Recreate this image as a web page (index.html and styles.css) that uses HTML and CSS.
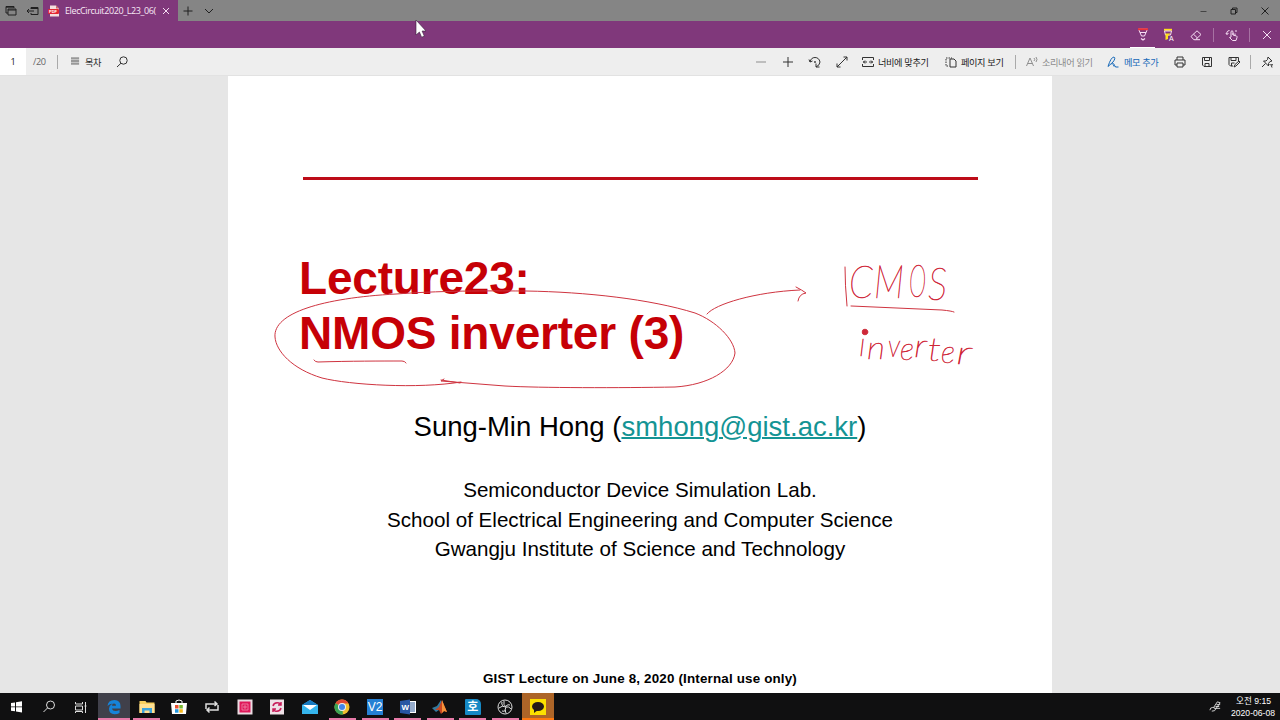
FILE: index.html
```html
<!DOCTYPE html>
<html lang="ko">
<head>
    <meta charset="UTF-8">
    <meta name="viewport" content="width=device-width, initial-scale=1.0">
    <title>ElecCircuit2020_L23</title>
    <link rel="stylesheet" href="styles.css">
</head>
<body>
<!-- Tabs -->
<header class="titlebar">
    <div class="tab-tools">
        <svg class="icon dark" viewBox="0 0 14 14"><path d="M4 9H2V2.5h8V4M2 3.2h8M4 5h8v6H4zM4 6h8"/></svg>
        <svg class="icon dark" viewBox="0 0 14 14"><path d="M6 5V3.5h7v7H6V9M6 4.5h7M2 7h7M4 5L2 7l2 2"/></svg>
    </div>
    <div class="tab">
        <svg class="pdf-icon" viewBox="0 0 12 12"><path d="M2 0.5h6l3 3v8H2z" fill="#f4dede"/><path d="M8 .5v3h3" fill="#c66"/><rect y="4" width="11" height="5" rx="1" fill="#e32632"/><text x="1" y="8.2">PDF</text></svg>
        <span class="tab-title">ElecCircuit2020_L23_06(</span>
        <svg class="icon light" viewBox="0 0 14 14"><path d="M4 4l6 6M10 4l-6 6"/></svg>
    </div>
    <svg class="icon dark new-tab" viewBox="0 0 14 14"><path d="M7 2.5v9M2.500 7h9"/></svg>
    <svg class="icon dark tab-menu" viewBox="0 0 14 14"><path d="M3 5l4 4 4-4"/></svg>
    <div class="window-buttons">
        <svg class="icon dark" viewBox="0 0 14 14"><path d="M4.500 7.500h6" stroke="#444"/></svg>
        <svg class="icon dark" viewBox="0 0 14 14"><path d="M4 5.500h4.500V10H4zM5.500 5.500V4H10v4.500H8.500"/></svg>
        <svg class="icon dark" viewBox="0 0 14 14"><path d="M3.500 3.500l7 7M10.500 3.500l-7 7"/></svg>
    </div>
</header>

<!-- Ink tools -->
<div class="inkbar">
    <div class="ink-tool active">
        <svg class="icon light" viewBox="0 0 14 14"><path d="M2.500 2h9L8.500 9h-3zM4 5.500h6"/><path d="M2 2.200h10" stroke="#e8303a" stroke-width="2"/><path d="M5 11.500l2 1.500L9 11.500" stroke-width="1.300"/></svg>
    </div>
    <div class="ink-tool">
        <svg class="icon light" viewBox="0 0 14 14"><path d="M2 1.800h8" stroke="#ffe11c" stroke-width="2"/><path d="M2.500 3h7L8.500 7h-5z"/><path d="M3.500 5.500h5L6 8v3l-2.500 1z" fill="#ffe11c" stroke="none"/><text x="7" y="12.500">A</text></svg>
    </div>
    <div class="ink-tool">
        <svg class="icon light" viewBox="0 0 14 14"><path d="M2 8.500L8 2.800l4 3.700-5.500 5.200H4.800zM4.500 6.200l4 3.800M6.500 11.700H11"/></svg>
    </div>
    <span class="sep"></span>
    <div class="ink-tool touch">
        <svg class="icon light" viewBox="0 0 14 14"><path d="M6 9V3.500q1-1.500 2 0V7l3.500 1q.8.300.5 1.500L11 12.500H7.500L4.500 9.500 6 9.200M8 7V5M10 7.500V5.500M4.500 2.500Q1 3 2 6.500M2 6.500L.8 5M2 6.500L3.500 5M11 2v2"/></svg>
    </div>
    <span class="sep"></span>
    <div class="ink-tool exit">
        <svg class="icon light" viewBox="0 0 14 14"><path d="M3 3l8 8M11 3l-8 8"/></svg>
    </div>
</div>

<!-- Document toolbar -->
<nav class="toolbar">
    <span class="page-number">1</span>
    <span class="page-total">/20</span>
    <span class="sep"></span>
    <div class="contents">
        <svg class="icon list" viewBox="0 0 10 10"><path d="M0 1.500h9M0 4.500h9M0 7.500h9" stroke="#999" stroke-width="2.400"/></svg>
        <span>목차</span>
    </div>
    <svg class="icon search" viewBox="0 0 14 14"><circle cx="8.500" cy="5.500" r="3.700"/><path d="M6 8.200L2 12"/></svg>
    <div class="zoom">
        <svg class="icon off" viewBox="0 0 14 14"><path d="M2 7h10"/></svg>
        <svg class="icon" viewBox="0 0 14 14"><path d="M7 2v10M2 7h10"/></svg>
        <svg class="icon" viewBox="0 0 14 14"><path d="M2 7Q3 2.500 7 2.500t5 4.500q0 3-4 5M1 4.500L2 7l2.500-1M8 8.500V12h3.500"/><circle cx="7" cy="7" r=".6"/></svg>
        <svg class="icon" viewBox="0 0 14 14"><path d="M2 12L12 2M8.500 2H12v3.500M2 8.500V12h3.500"/></svg>
    </div>
    <div class="tool fit">
        <svg class="icon" viewBox="0 0 14 14"><path d="M1.500 5V2.500h11V5M1.500 9v2.500h11V9M2 7h4M8 7h4M4 5.500L2.500 7 4 8.500M10 5.500L11.500 7 10 8.500"/></svg>
        <span>너비에 맞추기</span>
    </div>
    <div class="tool view">
        <svg class="icon" viewBox="0 0 14 14"><path d="M6 4h4l2 2v6H6z"/><path d="M4 11H2V3h6" stroke-dasharray="1.500 1"/></svg>
        <span>페이지 보기</span>
    </div>
    <span class="sep"></span>
    <div class="tool read off">
        <svg class="icon" viewBox="0 0 14 14"><path d="M1.500 11L5 3l3.500 8M2.800 8.500h4.500M9 3q1.500 1.500 0 3M11 2q2 2.500 0 5"/></svg>
        <span>소리내어 읽기</span>
    </div>
    <div class="tool note">
        <svg class="icon" viewBox="0 0 14 14"><path d="M2 11.500Q5 2 8 2q2 1-1 5L2 11.500M5.500 9q4-1 2 2 2-1 2 1h3" /></svg>
        <span>메모 추가</span>
    </div>
    <div class="file-tools">
        <svg class="icon" viewBox="0 0 14 14"><path d="M4 5V2h6v3M4 10H2V5h10v5h-2M4 8h6v4H4z"/></svg>
        <svg class="icon" viewBox="0 0 14 14"><path d="M2.500 2.500h9v9H4l-1.500-1.500zM4.500 2.500v3h5v-3M5 11.500V8.500h4v3"/></svg>
        <svg class="icon" viewBox="0 0 14 14"><path d="M6 11H3.500L2 9.500v-7h9.500V6M4 2.500v3h5v-3M4.500 11V8h3M7 12l1-2.500 4-3.500 1 1-4 4z"/></svg>
    </div>
    <span class="sep"></span>
    <svg class="icon pin" viewBox="0 0 14 14"><path d="M8 2l4 4-2 .5-1.500 2v2.500L3.500 6H6l1.500-1.500zM5.500 8.500L2 12M9.500 9l1 1 2-.5-1 1.500.5 1.500"/></svg>
</nav>

<!-- Slide -->
<main class="viewer">
    <article class="slide">
        <hr class="rule">
        <h1>Lecture23:<br>NMOS inverter (3)</h1>
        <p class="author">Sung-Min Hong (<a href="mailto:smhong@gist.ac.kr">smhong@gist.ac.kr</a>)</p>
        <p class="lab">Semiconductor Device Simulation Lab.<br>School of Electrical Engineering and Computer Science<br>Gwangju Institute of Science and Technology</p>
        <footer>GIST Lecture on June 8, 2020 (Internal use only)</footer>

        <!-- Pen annotations -->
        <svg class="ink" viewBox="228 76 824 617">
            <path d="M461 382C418 389 350 385 322 378C292 369 276 351 275 337C273 313 322 298 396 294C450 290 500 291 526 291C586 292 650 299 695 313C716 321 734 339 735 353C733 370 708 385 675 387C620 388 540 388 505 386L441 381l3-2M441 380l19 3"/>
            <path d="M314 360q1 2 4 2C350 361 382 361 402 361q3 0 4 2"/>
            <path d="M707 314C715 304 755 292 800 290M796 287q6 3 10 6q-7 1-8 8"/>
            <path d="M845 267q0 18 2 39M851 306L942 310q10 1 12 2"/>
            <g class="hand big">
                <text x="849" y="298" textLength="24" lengthAdjust="spacingAndGlyphs">C</text>
                <text x="874" y="298" textLength="30" lengthAdjust="spacingAndGlyphs">M</text>
                <text x="909" y="297" textLength="17" lengthAdjust="spacingAndGlyphs">O</text>
                <text x="928" y="300" textLength="19" lengthAdjust="spacingAndGlyphs">S</text>
            </g>
            <g class="hand">
                <text class="tall" x="859" y="356">i</text>
                <text x="867" y="359" textLength="18" lengthAdjust="spacingAndGlyphs">n</text>
                <text x="888" y="357" textLength="12" lengthAdjust="spacingAndGlyphs">v</text>
                <text x="900" y="360" textLength="14" lengthAdjust="spacingAndGlyphs">e</text>
                <text x="914" y="357" textLength="13" lengthAdjust="spacingAndGlyphs">r</text>
                <text x="928" y="361" textLength="13" lengthAdjust="spacingAndGlyphs">t</text>
                <text x="941" y="363" textLength="14" lengthAdjust="spacingAndGlyphs">e</text>
                <text x="956" y="364" textLength="16" lengthAdjust="spacingAndGlyphs">r</text>
            </g>
            <circle class="dot" cx="865" cy="332" r="2.800"/>
        </svg>
    </article>
</main>

<!-- Taskbar -->
<div class="taskbar">
    <div class="task"><svg viewBox="0 0 16 16"><path d="M3 4l4-.6v4H3zM8 3.200l6-.9v5.100H8zM3 8.300h4v4l-4-.6zM8 8.300h6v5.100l-6-.9z" fill="#fff"/></svg></div>
    <div class="task"><svg class="line" viewBox="0 0 16 16"><circle cx="9.500" cy="6" r="4"/><path d="M6.700 8.800L2.500 13"/></svg></div>
    <div class="task"><svg class="line" viewBox="0 0 16 16"><path d="M1.500 3v2h7V3M1.500 7h7v4h-7zM1.500 14v-1.500h7V14M11.500 3v11M10.500 7h2"/></svg></div>
    <div class="task open current"><svg viewBox="0 0 16 16"><path d="M1.500 7Q2 1 8.500 1q6 .5 6 6v2.500H6q.5 2.500 3.500 2.500 2 0 4-1v3q-2 1.200-5 1.200-5.500-.5-5.500-5.500Q3.200 6.500 6.500 4.500 3 5 1.500 7zM6 6.800h4Q10 4.600 8 4.600T6 6.800z" fill="#1683d9" fill-rule="evenodd"/></svg></div>
    <div class="task open"><svg viewBox="0 0 16 16"><path d="M0.500 2h6l1 1.500h8V14h-15z" fill="#f7cf5f"/><path d="M.5 5h15v9H.5z" fill="#ffe093"/><path d="M3 9h10v5h-2.500v-2.500h-5V14H3z" fill="#3da4dd"/></svg></div>
    <div class="task"><svg viewBox="0 0 16 16"><path d="M5 4V2q3-2 6 0v2" fill="none" stroke="#fff"/><path d="M0 4h16l-1 11H1z" fill="#fff"/><path d="M4 6h3.500v3.500H4z" fill="#e95030"/><path d="M8.300 6h3.500v3.500H8.300z" fill="#78b830"/><path d="M4 10.200h3.500v3.500H4z" fill="#2498e0"/><path d="M8.300 10.200h3.500v3.500H8.300z" fill="#f7b81d"/></svg></div>
    <div class="task"><svg class="line bold" viewBox="0 0 16 16"><path d="M2 10V5h11M10.500 2.500L13 5l-2.500 2M14 6v5H3M5.500 8.500L3 11l2.500 2.500"/></svg></div>
    <div class="task"><svg viewBox="0 0 16 16"><path d="M.5.500h15v15H.5z" fill="#eadbe1"/><path d="M2.500 2.500h11v11h-11z" fill="#df1859"/><path d="M5 5h6v6H5zM7 7h2v2H7z" fill="none" stroke="#f08aac" stroke-width=".8"/></svg></div>
    <div class="task"><svg viewBox="0 0 16 16"><path d="M1 .5h14v15H1z" fill="#eee1e6"/><path d="M4 7q1-4 6-3l2 2M12 3v3H9M12 9q-1 4-6 3l-2-2M4 13v-3h3" fill="none" stroke="#c81d5a" stroke-width="1.500"/></svg></div>
    <div class="task"><svg viewBox="0 0 16 16"><path d="M0 6l8-5 8 5v9H0z" fill="#35b5ed"/><path d="M0 6l8-5 8 5z" fill="#1779bf"/><path d="M1 6h14l-7 5z" fill="#fff"/></svg></div>
    <div class="task open"><svg viewBox="0 0 16 16"><circle cx="8" cy="8" r="7.500" fill="#efbf2f"/><path d="M8 8L1.500 4.200A7.500 7.500 0 0 1 14.500 4.500H8z" fill="#df4735"/><path d="M8 8l1 7.400A7.500 7.500 0 0 1 1.500 4.200z" fill="#3aa354"/><circle cx="8" cy="8" r="4" fill="#eee"/><circle cx="8" cy="8" r="3" fill="#4285e8"/></svg></div>
    <div class="task open"><span class="app v2">V2</span></div>
    <div class="task open"><svg viewBox="0 0 16 16"><path d="M7 2h9v12H7z" fill="#fff"/><path d="M9 4h6M9 6h6M9 8h6M9 10h6M9 12h6" stroke="#2c5898"/><path d="M0 2l10-1.500v15L0 14z" fill="#2856a3"/><text class="word" x="1.500" y="11">W</text></svg></div>
    <div class="task open"><svg viewBox="0 0 16 16"><path d="M0 9l5-2 4-6 2 8-4 2-3 2z" fill="#347b9f"/><path d="M3 11l4-3 3-7 2 5 3 7-3-1-3 3-2-4z" fill="#c84822"/><path d="M10 1l2 5 3 7-3-1-2 2z" fill="#f5933a"/></svg></div>
    <div class="task open"><span class="app han">호</span></div>
    <div class="task open"><svg class="line" viewBox="0 0 16 16"><circle cx="8" cy="8" r="7"/><path d="M7 2q-1 4 2 6 3-1 5 2M9 8q-2 3 0 6M9 8Q5 6 2 9M5 3q-1 2 1 4M13 6q-2-1-4 1M5 12q2 1 4-1"/></svg></div>
    <div class="task open talk"><svg viewBox="0 0 16 16"><path d="M0 0h16v16H0z" fill="#fce000"/><ellipse cx="8" cy="7.500" rx="6" ry="4.500" fill="#251a17"/><path d="M4 10v4l4-3z" fill="#251a17"/></svg></div>
    <svg class="tray line" viewBox="0 0 14 14"><path d="M1 11q0-3 3-3t3 2-4 2M5 8l4-6 3 1-5 7M8 5h4M7 7h4M6 9h6"/></svg>
    <div class="clock"><span>오전 9:15</span><span>2020-06-08</span></div>
</div>

<svg class="cursor" viewBox="0 0 12 20"><path d="M1 1v15l3.400-3 2.200 5.200 2.700-1.100L7.100 12H11z"/></svg>
</body>
</html>
```

FILE: styles.css
```css
* {
    box-sizing: border-box;
}
body {
    margin: 0;
    width: 1280px;
    height: 720px;
    overflow: hidden;
    background-color: #e6e6e6;
    font-family: "Liberation Sans", "Noto Sans CJK KR", sans-serif;
    display: flex;
    flex-direction: column;
}
svg {
    display: block;
    flex: none;
}
.icon {
    width: 14px;
    height: 14px;
    fill: none;
    stroke: #333;
    stroke-width: 1;
}
.icon.dark {
    stroke: #202020;
}
.icon.light {
    stroke: #f6def4;
}
.icon text {
    font-size: 7px;
    fill: #fff;
    stroke: none;
}
.sep {
    width: 1px;
    height: 14px;
    flex: none;
    background-color: #aaa;
}

/* tabs */
.titlebar {
    height: 21px;
    flex: none;
    display: flex;
    align-items: center;
    background-color: #858585;
}
.tab-tools {
    width: 43px;
    padding-left: 4px;
    display: flex;
    gap: 7px;
}
.tab {
    width: 135px;
    height: 21px;
    padding-left: 5px;
    display: flex;
    align-items: center;
    background-color: #80387b;
    color: #f7e8f5;
}
.pdf-icon {
    width: 12px;
    height: 12px;
}
.pdf-icon text {
    font-size: 4px;
    font-weight: bold;
    fill: #fff;
}
.tab-title {
    width: 92px;
    margin-left: 5px;
    margin-right: 2px;
    white-space: nowrap;
    font: 9px "Open Sans", sans-serif;
    letter-spacing: -0.4px;
}
.new-tab {
    margin-left: 3px;
}
.tab-menu {
    margin-left: 7px;
}
.window-buttons {
    margin-left: auto;
    padding-right: 8px;
    display: flex;
    gap: 17px;
}

/* ink tools */
.inkbar {
    height: 27px;
    flex: none;
    display: flex;
    align-items: center;
    justify-content: flex-end;
    background-color: #80387b;
}
.ink-tool {
    width: 27px;
    height: 27px;
    display: flex;
    align-items: center;
    justify-content: center;
}
.ink-tool.active {
    width: 25px;
    border-bottom: 1px solid #fff;
}
.inkbar .sep {
    background-color: #a772a3;
    margin-left: 4px;
}
.ink-tool.touch {
    width: 35px;
}
.inkbar .touch + .sep {
    margin-left: 0;
}
.ink-tool.exit {
    width: 27px;
    margin-left: 3px;
}

/* document toolbar */
.toolbar {
    height: 28px;
    flex: none;
    display: flex;
    align-items: center;
    background-color: #eee;
    border-bottom: 1px solid #e2e2e2;
    font: 9.200px "Noto Sans CJK KR", sans-serif;
    letter-spacing: -0.4px;
    color: #222;
}
.page-number {
    width: 26px;
    height: 27px;
    line-height: 27px;
    text-align: center;
    font-family: "Open Sans", sans-serif;
    background-color: #fff;
}
.page-total {
    width: 31px;
    padding-left: 7px;
    color: #666;
    font-family: "Open Sans", sans-serif;
}
.contents {
    display: flex;
    align-items: center;
    gap: 5px;
    margin-left: 13px;
    width: 45px;
}
.icon.list {
    width: 9px;
    height: 9px;
}
.search {
    margin-left: -1px;
}
.zoom {
    margin-left: 625px;
    display: flex;
    gap: 13px;
}
.off {
    opacity: 0.5;
}
.tool {
    display: flex;
    align-items: center;
    gap: 3px;
    flex: none;
    white-space: nowrap;
}
.tool.fit {
    width: 83px;
    margin-left: 12px;
}
.tool.view {
    width: 71px;
}
.tool.read {
    width: 81px;
    margin-left: 9px;
}
.tool.note {
    width: 66px;
    gap: 4px;
    color: #1467b8;
}
.tool.note .icon {
    stroke: #1467b8;
}
.file-tools {
    display: flex;
    gap: 13px;
    margin-left: 1px;
    margin-right: 9px;
}
.pin {
    margin-left: 9px;
}

/* slide */
.viewer {
    height: 617px;
    flex: none;
    display: flex;
    justify-content: center;
}
.slide {
    position: relative;
    width: 824px;
    height: 617px;
    background-color: #fff;
    color: #000;
    text-align: center;
    display: flex;
    flex-direction: column;
}
.rule {
    width: 675px;
    height: 3px;
    margin: 101px auto 0 75px;
    border: none;
    background-color: #bd0c18;
}
h1 {
    margin: 71px 0 0 71px;
    text-align: left;
    font-size: 46px;
    line-height: 55px;
    letter-spacing: -0.2px;
    color: #c60006;
}
.author {
    margin: 50px 0 0;
    font-size: 27.500px;
    line-height: 32px;
}
.author a {
    color: #149494;
    text-decoration-thickness: 2px;
}
.lab {
    margin: 32px 0 0;
    font-size: 20.600px;
    line-height: 29.600px;
}
footer {
    margin-top: auto;
    padding-bottom: 6px;
    font-size: 13.400px;
    letter-spacing: 0.17px;
    line-height: 16px;
    font-weight: bold;
}
.ink {
    position: absolute;
    left: 0;
    top: 0;
    width: 824px;
    height: 617px;
    fill: none;
    stroke: #cf3440;
    stroke-width: 1;
    stroke-linecap: round;
}
.hand {
    font-family: Lato, sans-serif;
    font-weight: 100;
    font-style: italic;
    font-size: 31px;
    fill: #cf2638;
    stroke: #cf2638;
    stroke-width: 0.6;
}
.hand .tall {
    font-size: 34px;
}
.hand.big {
    font-size: 46px;
}
.dot {
    fill: #cf2638;
}

/* taskbar */
.taskbar {
    height: 27px;
    flex: none;
    display: flex;
    align-items: center;
    background-color: #101011;
}
.task {
    width: 32.620px;
    height: 27px;
    display: flex;
    flex: none;
    align-items: center;
    justify-content: center;
}
.task svg {
    width: 16px;
    height: 16px;
}
.task.open {
    background: linear-gradient(#e77aa8, #e77aa8) center bottom / 27px 2px no-repeat;
}
.task.current {
    background-color: #40404a;
    background-size: 100% 2px;
}
.task.talk {
    background: #ad6528;
    border-bottom: 2px solid #ff7910;
    padding-top: 2px;
}
.line {
    fill: none;
    stroke: #ddd;
    stroke-width: 1;
}
.line.bold {
    stroke-width: 1.500;
}
.app {
    width: 16px;
    height: 16px;
    line-height: 16px;
    text-align: center;
    color: #fff;
    font-size: 12px;
}
.v2 {
    background-color: #2580d4;
}
.han {
    background-color: #1689c5;
    border-radius: 1px 5px 1px 1px;
    font-weight: bold;
}
.word {
    font-size: 8px;
    font-weight: bold;
    fill: #fff;
}
.tray {
    width: 13px;
    height: 13px;
    margin-left: auto;
}
.clock {
    width: 58px;
    padding-right: 5px;
    display: flex;
    flex-direction: column;
    text-align: right;
    font-size: 8.600px;
    line-height: 12px;
    color: #fff;
    white-space: nowrap;
}
.clock span:first-child {
    padding-right: 4px;
}

.cursor {
    position: absolute;
    left: 415px;
    top: 19px;
    width: 12px;
    height: 20px;
    fill: #fff;
    stroke: #35203a;
    stroke-width: 0.6;
}
```
